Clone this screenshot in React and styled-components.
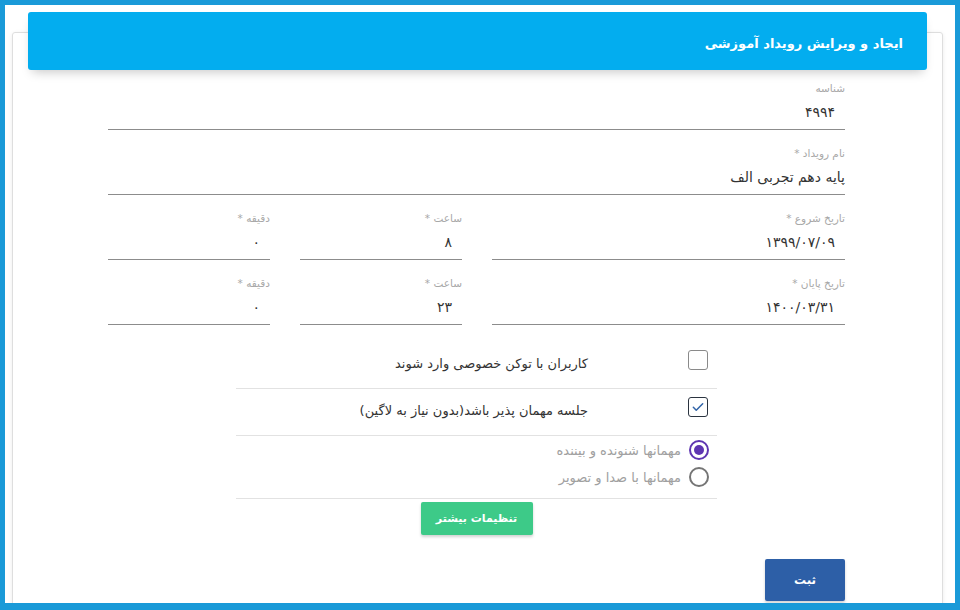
import React from "react";
import styled, { createGlobalStyle } from "styled-components";

const GlobalStyle = createGlobalStyle`
  html, body {
    margin: 0;
    padding: 0;
    background: #ffffff;
  }
  * {
    box-sizing: border-box;
  }
`;

const COLORS = {
  FRAME: "#1a9ad8",
  HEADER: "#03adef",
  LABEL: "#a8a8a8",
  TEXT: "#333333",
  LINE: "#8c8c8c",
  DIVIDER: "#e2e2e2",
  GREEN: "#3dca88",
  BLUE: "#2d5fa7",
  PURPLE: "#5e35b1",
};

const Frame = styled.div`
  width: 960px;
  height: 610px;
  border: 5px solid ${COLORS.FRAME};
  border-bottom-width: 7px;
  background: #ffffff;
  overflow: hidden;
  padding: 27px 12px 0 7px;
  font-family: "DejaVu Sans", sans-serif;
  direction: rtl;
`;

const Card = styled.div`
  height: 620px;
  border: 1px solid #dedede;
  border-radius: 3px;
  box-shadow: 0 1px 4px rgba(0, 0, 0, 0.08);
  display: flex;
  flex-direction: column;
`;

const Header = styled.div`
  margin: -21px 15px 0 15px;
  height: 58px;
  background: ${COLORS.HEADER};
  border-radius: 3px;
  box-shadow: 0 6px 10px -4px rgba(0, 0, 0, 0.22);
  display: flex;
  align-items: center;
  padding: 4px 24px 0;
`;

const Title = styled.div`
  color: #ffffff;
  font-size: 13px;
  font-weight: 700;
`;

const Form = styled.div`
  width: 737px;
  margin: 10px 97px 0 0;
  display: flex;
  flex-direction: column;
  gap: 15px;
`;

const Grid = styled.div`
  display: grid;
  grid-template-columns: 353px 162px 162px;
  column-gap: 30px;
`;

const Field = styled.div`
  display: flex;
  flex-direction: column;
`;

const Label = styled.div`
  font-size: 10.5px;
  line-height: 16px;
  color: ${COLORS.LABEL};
`;

const Value = styled.div`
  height: 34px;
  line-height: 32px;
  font-size: 14px;
  color: ${COLORS.TEXT};
  border-bottom: 1px solid ${COLORS.LINE};
  padding-right: ${(p) => (p.$num ? "10px" : "0")};
`;

const Options = styled.div`
  width: 481px;
  margin: -9px auto 0;
  display: flex;
  flex-direction: column;
`;

const CheckRow = styled.div`
  height: ${(p) => p.$h}px;
  display: flex;
  align-items: flex-start;
  gap: 100px;
  padding: ${(p) => p.$top}px 9px 0 0;
  border-bottom: 1px solid ${COLORS.DIVIDER};
`;

const Box = styled.span`
  width: 20px;
  height: 20px;
  flex: none;
  border: 1.5px solid ${(p) => (p.$checked ? "#2b3440" : "#8a8a8a")};
  border-radius: 3px;
  display: flex;
  align-items: center;
  justify-content: center;
`;

const CheckText = styled.span`
  font-size: 13px;
  line-height: 20px;
  color: ${COLORS.TEXT};
  margin-top: 4px;
`;

const RadioGroup = styled.div`
  height: 63px;
  display: flex;
  flex-direction: column;
  gap: 7px;
  padding: 4px 8px 0 0;
  border-bottom: 1px solid ${COLORS.DIVIDER};
`;

const RadioRow = styled.div`
  display: flex;
  align-items: center;
  gap: 8px;
`;

const RadioCircle = styled.span`
  width: 20px;
  height: 20px;
  flex: none;
  border-radius: 50%;
  border: 2px solid ${(p) => (p.$on ? COLORS.PURPLE : "#757575")};
  display: flex;
  align-items: center;
  justify-content: center;

  &::after {
    content: "";
    width: 10px;
    height: 10px;
    border-radius: 50%;
    background: ${(p) => (p.$on ? COLORS.PURPLE : "transparent")};
  }
`;

const RadioText = styled.span`
  font-size: 13px;
  color: #a0a0a0;
`;

const MoreButton = styled.div`
  align-self: center;
  margin-top: 3px;
  width: 112px;
  height: 33px;
  background: ${COLORS.GREEN};
  border-radius: 2px;
  box-shadow: 0 2px 3px rgba(0, 0, 0, 0.18);
  color: #ffffff;
  font-size: 11px;
  font-weight: 700;
  display: flex;
  align-items: center;
  justify-content: center;
`;

const SubmitRow = styled.div`
  display: flex;
  margin-top: 9px;
`;

const SubmitButton = styled.div`
  width: 80px;
  height: 42px;
  background: ${COLORS.BLUE};
  border-radius: 2px;
  box-shadow: 0 2px 3px rgba(0, 0, 0, 0.18);
  color: #ffffff;
  font-size: 12px;
  font-weight: 700;
  display: flex;
  align-items: center;
  justify-content: center;
`;

const Check = () => (
  <svg width="14" height="14" viewBox="0 0 24 24">
    <path d="M4 12.5l5 5L20 6.5" fill="none" stroke="#3164a8" strokeWidth="2.6" strokeLinecap="round" strokeLinejoin="round" />
  </svg>
);

function TextField({ label, value, num }) {
  return (
    <Field>
      <Label>{label}</Label>
      <Value $num={num}>{value}</Value>
    </Field>
  );
}

export default function App() {
  return (
    <Frame>
      <GlobalStyle />
      <Card>
        <Header>
          <Title>ایجاد و ویرایش رویداد آموزشی</Title>
        </Header>
        <Form>
          <TextField label="شناسه" value="۴۹۹۴" num />
          <TextField label="نام رویداد *" value="پایه دهم تجربی الف" />
          <Grid>
            <TextField label="تاریخ شروع *" value="۱۳۹۹/۰۷/۰۹" num />
            <TextField label="ساعت *" value="۸" num />
            <TextField label="دقیقه *" value="۰" num />
          </Grid>
          <Grid>
            <TextField label="تاریخ پایان *" value="۱۴۰۰/۰۳/۳۱" num />
            <TextField label="ساعت *" value="۲۳" num />
            <TextField label="دقیقه *" value="۰" num />
          </Grid>
          <Options>
            <CheckRow $h={58} $top={19}>
              <Box />
              <CheckText>کاربران با توکن خصوصی وارد شوند</CheckText>
            </CheckRow>
            <CheckRow $h={47} $top={8}>
              <Box $checked>
                <Check />
              </Box>
              <CheckText>جلسه مهمان پذیر باشد(بدون نیاز به لاگین)</CheckText>
            </CheckRow>
            <RadioGroup>
              <RadioRow>
                <RadioCircle $on />
                <RadioText>مهمانها شنونده و بیننده</RadioText>
              </RadioRow>
              <RadioRow>
                <RadioCircle />
                <RadioText>مهمانها با صدا و تصویر</RadioText>
              </RadioRow>
            </RadioGroup>
            <MoreButton>تنظیمات بیشتر</MoreButton>
          </Options>
          <SubmitRow>
            <SubmitButton>ثبت</SubmitButton>
          </SubmitRow>
        </Form>
      </Card>
    </Frame>
  );
}
